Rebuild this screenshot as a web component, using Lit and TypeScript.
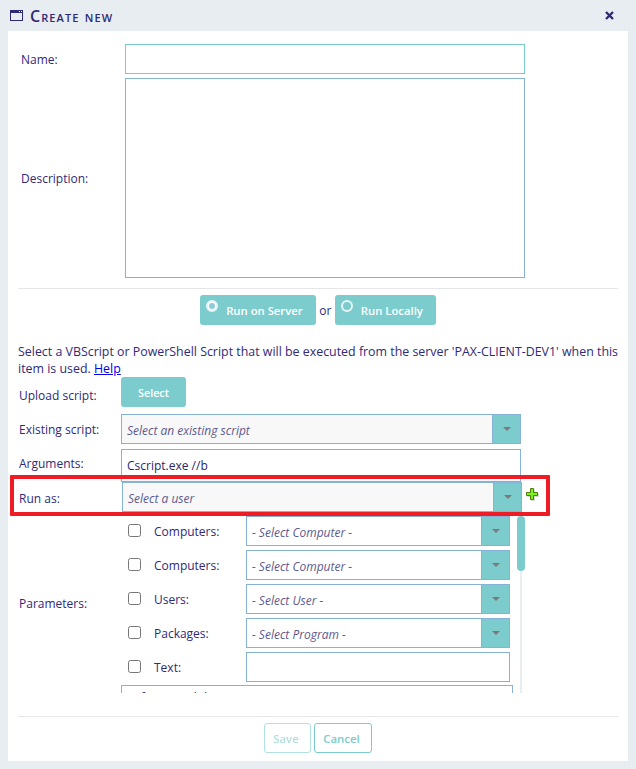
import { LitElement, html, css } from "lit";
import { customElement } from "lit/decorators.js";

const caret = html`<span class="caret"><i></i></span>`;

@customElement("app-root")
export class AppRoot extends LitElement {
  static override styles = css`
    :host {
      display: block;
      width: 636px;
      height: 769px;
      background: #e8edf2;
      font-family: "Open Sans", "Noto Sans", sans-serif;
      font-size: 12px;
      color: #2f2a78;
      overflow: hidden;
    }
    .title {
      height: 31px;
      display: flex;
      align-items: center;
      padding: 0 22px 0 10px;
      color: #2e2a75;
    }
    .title .win {
      margin-right: 7px;
    }
    .title h1 {
      flex: 1;
      margin: 0;
      font-size: 16px;
      font-weight: 600;
      font-variant: small-caps;
      letter-spacing: 1.1px;
    }
    .panel {
      margin: 0 8px;
      height: 730px;
      background: #fff;
      display: flex;
      flex-direction: column;
      padding: 13px 10px 0;
      box-sizing: border-box;
    }
    .top {
      display: grid;
      grid-template-columns: 107px 400px;
      row-gap: 4px;
      align-items: center;
    }
    .top label {
      padding-left: 3px;
    }
    .box {
      box-sizing: border-box;
      border: 1px solid #85b2d6;
      background: #fff;
    }
    .name {
      height: 30px;
      border-color: #7accca;
    }
    .desc {
      height: 200px;
    }
    hr {
      border: 0;
      border-top: 1px solid #e4e6e8;
      margin: 0;
    }
    .hr-top {
      margin-top: 10px;
    }
    .mode {
      display: flex;
      justify-content: center;
      align-items: center;
      gap: 3.5px;
      margin-top: 6px;
    }
    .btn {
      background: #7ccccd;
      color: #fff;
      border-radius: 3px;
      font-weight: 600;
      font-size: 11.3px;
      box-sizing: border-box;
      height: 30px;
      display: flex;
      align-items: center;
      justify-content: center;
    }
    .radio {
      position: relative;
      padding-left: 26px;
      padding-right: 13px;
    }
    .radio i {
      position: absolute;
      left: 6px;
      top: 5px;
      width: 12px;
      height: 12px;
      box-sizing: border-box;
      border: 2px solid #e6f6f6;
      border-radius: 50%;
    }
    .radio i.on {
      background: #fff;
    }
    .radio i.on::after {
      content: "";
      position: absolute;
      inset: 1px;
      border-radius: 50%;
      background: #8fcbd6;
    }
    .info {
      margin: 18px 0 0;
      font-size: 12.4px;
      line-height: 17px;
      color: #2f2a78;
    }
    .info a {
      color: #0000ee;
    }
    .form {
      padding-left: 1px;
    }
    .row {
      display: flex;
      align-items: center;
    }
    .row > label {
      width: 102px;
    }
    .row > label.upload-label {
      margin-top: 6px;
    }
    .row > label.args-label {
      margin-bottom: 4px;
    }
    .upload {
      width: 65px;
      font-size: 10.8px;
    }
    .select {
      display: flex;
      width: 400px;
      height: 30px;
      box-sizing: border-box;
      border: 1px solid #85b2d6;
      background: #f8f8f9;
    }
    .select span.value {
      flex: 1;
      padding: 2px 5px 0;
      line-height: 28px;
      font-style: italic;
      color: #5d5a8f;
    }
    .caret {
      width: 27px;
      background: #7ccccd;
      border-left: 1px solid #85b2d6;
      display: flex;
      align-items: center;
      justify-content: center;
    }
    .caret i {
      width: 0;
      height: 0;
      border: 4px solid transparent;
      border-top: 4px solid #7a7a7a;
      border-bottom: 0;
    }
    .args {
      width: 400px;
      height: 33px;
      padding: 3px 5px 0;
      line-height: 26px;
      color: #2a2670;
    }
    .run-as {
      position: relative;
    }
    .run-as > label {
      width: 103px;
      margin-top: 2px;
    }
    .plus {
      margin-left: 4px;
      margin-bottom: 5px;
      filter: drop-shadow(1px 1px 0 #d5d5d5);
    }
    .flag {
      position: absolute;
      left: -9px;
      top: -7px;
      width: 540px;
      height: 41px;
      box-sizing: border-box;
      border: 4px solid #ee1c25;
      border-radius: 1px;
      pointer-events: none;
    }
    .params {
      display: flex;
      margin-top: 4px;
      height: 177px;
    }
    .params > label {
      width: 102px;
      align-self: center;
      padding-bottom: 3px;
    }
    .scroll {
      position: relative;
      width: 404px;
      overflow: hidden;
    }
    .p-row {
      display: flex;
      align-items: center;
      height: 30px;
      margin-bottom: 4px;
      padding-left: 7px;
    }
    .check {
      width: 13px;
      height: 13px;
      box-sizing: border-box;
      border: 1px solid #767676;
      border-radius: 2.5px;
      background: #fff;
      margin-right: 13px;
      margin-top: -1px;
    }
    .p-row > span.name-label {
      width: 92px;
      margin-top: 1px;
    }
    .p-row .select {
      width: 264px;
      background: #fff;
    }
    .p-text {
      width: 264px;
      height: 30px;
    }
    .notes {
      width: 392px;
      height: 40px;
      margin-top: -1px;
      padding: 3px 5px;
      font-size: 12px;
      line-height: 18px;
      color: #2a2670;
    }
    .track {
      position: absolute;
      top: 0;
      right: 0;
      width: 2px;
      height: 177px;
      background: #e8edf2;
      margin-right: 3px;
    }
    .thumb {
      position: absolute;
      top: 0;
      right: 0;
      width: 8px;
      height: 55px;
      border-radius: 4px;
      background: #7ccccd;
    }
    .hr-bottom {
      margin-top: 23px;
    }
    .actions {
      display: flex;
      justify-content: center;
      gap: 3px;
      margin-top: 6px;
    }
    .ghost {
      height: 30px;
      box-sizing: border-box;
      border-radius: 3px;
      border: 1px solid #7ccccd;
      padding-right: 3px;
      color: #7ccccd;
      background: #fff;
      font-weight: 600;
      font-size: 11.4px;
      display: flex;
      align-items: center;
      justify-content: center;
    }
    .save {
      width: 47px;
      opacity: 0.6;
    }
    .cancel {
      width: 58px;
    }
  `;

  private select(text: string) {
    return html`<div class="select"><span class="value">${text}</span>${caret}</div>`;
  }

  private param(name: string, placeholder: string) {
    return html`<div class="p-row">
      <span class="check"></span>
      <span class="name-label">${name}</span>
      ${this.select(placeholder)}
    </div>`;
  }

  override render() {
    return html`
      <div class="title">
        <svg class="win" width="13" height="12" viewBox="0 0 13 12">
          <rect x="0.5" y="0.5" width="12" height="10" fill="none" stroke="#2e2a75" />
          <rect x="0" y="0" width="13" height="3" fill="#2e2a75" />
          <rect x="9" y="1" width="1" height="1" fill="#fff" />
          <rect x="11" y="1" width="1" height="1" fill="#fff" />
        </svg>
        <h1>Create new</h1>
        <svg width="9" height="9" viewBox="0 0 9 9">
          <path d="M1 1 L8 8 M8 1 L1 8" stroke="#2e2a75" stroke-width="2.4" />
        </svg>
      </div>
      <div class="panel">
        <div class="top">
          <label>Name:</label>
          <div class="box name"></div>
          <label>Description:</label>
          <div class="box desc"></div>
        </div>
        <hr class="hr-top" />
        <div class="mode">
          <div class="btn radio"><i class="on"></i>Run on Server</div>
          <span>or</span>
          <div class="btn radio"><i></i>Run Locally</div>
        </div>
        <p class="info">
          Select a VBScript or PowerShell Script that will be executed from the server
          'PAX-CLIENT-DEV1' when this item is used. <a href="#">Help</a>
        </p>
        <div class="form">
          <div class="row">
            <label class="upload-label">Upload script:</label>
            <div class="btn upload">Select</div>
          </div>
          <div class="row" style="margin-top:7px">
            <label>Existing script:</label>
            ${this.select("Select an existing script")}
          </div>
          <div class="row" style="margin-top:5px">
            <label class="args-label">Arguments:</label>
            <div class="box args">Cscript.exe //b</div>
          </div>
          <div class="row run-as">
            <label>Run as:</label>
            ${this.select("Select a user")}
            <svg class="plus" width="13" height="13" viewBox="0 0 13 13">
              <path d="M4.5 .5h3v4h4v3h-4v4h-3v-4h-4v-3h4z" fill="#7cf21c" stroke="#4d7f08" />
            </svg>
            <div class="flag"></div>
          </div>
          <div class="params">
            <label>Parameters:</label>
            <div class="scroll">
              ${this.param("Computers:", "- Select Computer -")}
              ${this.param("Computers:", "- Select Computer -")}
              ${this.param("Users:", "- Select User -")}
              ${this.param("Packages:", "- Select Program -")}
              <div class="p-row">
                <span class="check"></span>
                <span class="name-label">Text:</span>
                <div class="box p-text"></div>
              </div>
              <div class="box notes">Software Validation</div>
              <div class="track"></div>
              <div class="thumb"></div>
            </div>
          </div>
        </div>
        <hr class="hr-bottom" />
        <div class="actions">
          <div class="ghost save">Save</div>
          <div class="ghost cancel">Cancel</div>
        </div>
      </div>
    `;
  }
}
